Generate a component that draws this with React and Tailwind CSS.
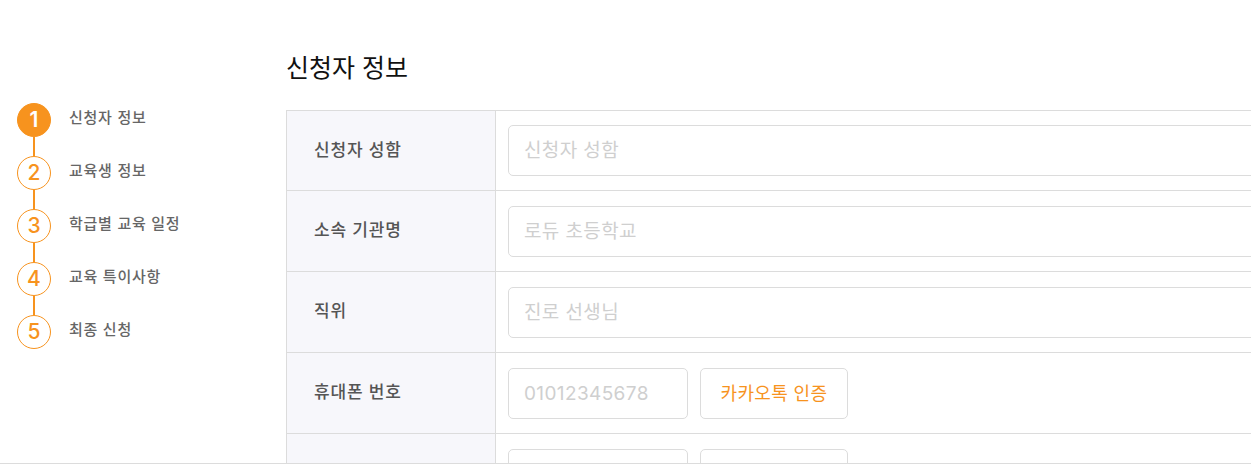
import React from 'react';

const steps = ['신청자 정보', '교육생 정보', '학급별 교육 일정', '교육 특이사항', '최종 신청'];

const Stepper = () => {
  return (
    <div className="flex flex-col pl-[17px] pt-[103px]">
      {steps.map((label, i) => (
        <div key={label} className="flex flex-col">
          {i > 0 && <div className="ml-[16px] h-[19px] w-[2px] bg-[#f7931e]" />}
          <div className="flex items-center">
            <div
              className={
                i === 0
                  ? 'flex h-[34px] w-[34px] items-center justify-center rounded-full border border-[#f7931e] bg-[#f7931e] text-[21px] font-semibold text-white'
                  : 'flex h-[34px] w-[34px] items-center justify-center rounded-full border border-[#f7931e] bg-white text-[21px] font-medium text-[#f7931e]'
              }
            >
              {i + 1}
            </div>
            <span className="ml-[18px] -mt-[4px] text-[15px] font-medium tracking-[0.05em] text-[#666]">{label}</span>
          </div>
        </div>
      ))}
    </div>
  );
};

const Row = ({ label, first, children }) => {
  return (
    <div className={'flex border-b border-[#dcdcdc] ' + (first ? 'h-[80px]' : 'h-[81px]')}>
      <div className="flex w-[209px] shrink-0 items-center border-r border-[#dcdcdc] bg-[#f7f7fb] pl-[27px] text-[17px] font-medium tracking-[0.05em] text-[#555]">
        {label}
      </div>
      <div className="flex flex-1 items-center gap-3 pl-3">{children}</div>
    </div>
  );
};

const Field = ({ placeholder, className }) => {
  return (
    <div
      className={
        'flex h-[51px] items-center rounded-[5px] border border-[#dcdcdc] bg-white px-[15px] pt-[2px] text-[19px] tracking-[0.02em] text-[#cfcfcf] ' +
        (className || 'w-[900px]')
      }
    >
      {placeholder}
    </div>
  );
};

const App = () => {
  return (
    <div
      className="h-[464px] w-full overflow-hidden border-b border-[#dcdcdc] bg-white"
      style={{ fontFamily: 'Inter, "Noto Sans CJK KR", sans-serif' }}
    >
      <div className="flex">
        <div className="w-[286px] shrink-0">
          <Stepper />
        </div>
        <div className="min-w-0 flex-1 pt-[51px]">
          <h2 className="mb-[25px] text-[25px] font-normal leading-[34px] text-[#111]">신청자 정보</h2>
          <div className="w-[1100px] border-l border-t border-[#dcdcdc]">
            <Row label="신청자 성함" first>
              <Field placeholder="신청자 성함" />
            </Row>
            <Row label="소속 기관명">
              <Field placeholder="로듀 초등학교" />
            </Row>
            <Row label="직위">
              <Field placeholder="진로 선생님" />
            </Row>
            <Row label="휴대폰 번호">
              <Field placeholder="01012345678" className="w-[180px]" />
              <button className="flex h-[51px] w-[148px] items-center justify-center rounded-[5px] border border-[#dcdcdc] bg-white text-[18px] tracking-[0.02em] text-[#f7931e]">
                카카오톡 인증
              </button>
            </Row>
            <Row label="">
              <Field placeholder="" className="w-[180px]" />
              <div className="h-[51px] w-[148px] rounded-[5px] border border-[#dcdcdc] bg-white" />
            </Row>
          </div>
        </div>
      </div>
    </div>
  );
};

export default App;
